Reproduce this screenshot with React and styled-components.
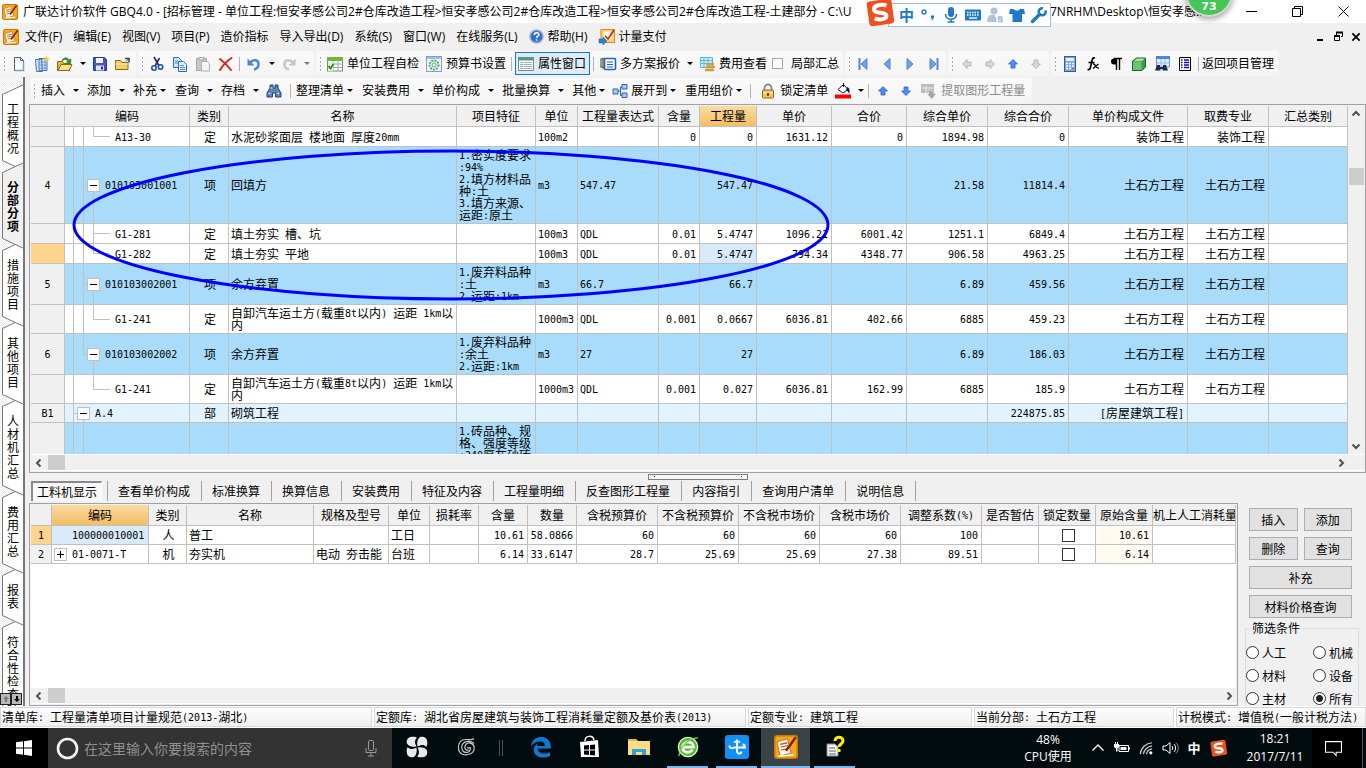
import React from 'react';
import styled, { createGlobalStyle, css } from 'styled-components';

const LINE = '#c0c0c0';
const FACE = '#f0f0f0';
const UI = '"Open Sans", "Noto Sans CJK SC", sans-serif';
const GRID = '"Noto Sans CJK SC", sans-serif';

const Global = createGlobalStyle`
  *, *::before, *::after { box-sizing: border-box; }
  body { margin: 0; background: ${FACE}; overflow: hidden; }
  button, input { font: inherit; color: inherit; margin: 0; }
  button { padding: 0; border: 0; background: none; }
`;

const Window = styled.div`
  height: 100vh;
  display: flex;
  flex-direction: column;
  background: ${FACE};
  color: #000;
  font: 12px/16px ${UI};
  position: relative;
  overflow: hidden;
`;

/* ---------- text ---------- */

const Latin = styled.span`
  font: 10px/0 "DejaVu Sans Mono", monospace;
  vertical-align: 1px;
`;

function T({ children }) {
  return String(children)
    .split(/([\x20-\x7e]+)/)
    .filter(Boolean)
    .map((s, i) => (/^[\x20-\x7e]+$/.test(s) ? <Latin key={i}>{s}</Latin> : s));
}

/* ---------- icons ---------- */

const Svg = styled.svg`
  display: block;
  flex: none;
  overflow: visible;
`;
const Ico = ({ s = 16, box = 16, children }) => (
  <Svg width={s} height={s} viewBox={`0 0 ${box} ${box}`} fill="none" aria-hidden="true">{children}</Svg>
);

const AppLogo = ({ s }) => (
  <Ico s={s}>
    <rect x=".5" y=".5" width="15" height="15" rx="1.5" fill="#f6a81c" stroke="#c8770a" />
    <path d="M2 4.500l7-2 2.500 9.500-7.500 2z" fill="#fff8e6" stroke="#b86a10" strokeWidth=".6" />
    <path d="M4 6.2l5-1M4.4 8l5-1M4.8 10l5-1" stroke="#9a5a20" strokeWidth=".8" />
    <path d="M14.500 1.500L8 10.500" stroke="#8a1c08" strokeWidth="1.600" />
    <path d="M3 14.200l10-1" stroke="#fff" />
  </Ico>
);
const New = () => (
  <Ico><path d="M3.500 1.500h6l3 3v10h-9z" fill="#fdfeff" stroke="#4c6384" /><path d="M9.500 1.500v3h3" stroke="#4c6384" /><path d="M12.500 6v8.500h-8" stroke="#7d9cc8" strokeWidth="1.4" /></Ico>
);
const Sheets = () => (
  <Ico><path d="M1.500 3.500h6l1 12h-6zM5 2.500h8v12H5z" fill="#dce9fa" stroke="#4674b4" /><path d="M5 6h8M5 9h8M5 12h8M8 3v12M11 3v12" stroke="#6b95cf" /><path d="M12.500 0v6M9.500 3h6M10.500 1l4 4M14.500 1l-4 4" stroke="#ffce3a" /></Ico>
);
const Open = () => (
  <Ico><path d="M.5 14.500V5.500h5l1 2h6v7z" fill="#e6b53c" stroke="#8b6914" /><path d="M1 14.500l3-6h11l-3 6z" fill="#fbe08a" stroke="#8b6914" /><path d="M5 5c1-4 6-4 7-1l2-1-.5 5-4-2 1.500-1C10 3 7 3 5 5z" fill="#2da32c" stroke="#127017" strokeWidth=".6" /></Ico>
);
const Save = () => (
  <Ico><path d="M1.500 1.500h11l2 2v11h-13z" fill="#4a55c4" stroke="#2c3590" /><path d="M4 2h7v5H4z" fill="#f3f5ff" /><path d="M4 9.500h8v5H4z" fill="#dfe3f8" /><path d="M9 10.500h2v3H9z" fill="#2c3590" /></Ico>
);
const Folder = () => (
  <Ico><path d="M.5 13.500v-9h5l1.500 2h6v7z" fill="#f1cf6b" stroke="#8b6914" /><path d="M.5 8h12.500" stroke="#fbe9ae" /><path d="M10 2.500h4v4" stroke="#27486e" strokeWidth="1.500" /><path d="M14 2.500l-3 3" stroke="#27486e" /></Ico>
);
const Cut = () => (
  <Ico><path d="M5 1l5 9M10.500 2L6 10" stroke="#20304c" strokeWidth="1.600" /><circle cx="5" cy="12" r="2.200" stroke="#1f4fa8" strokeWidth="1.600" /><circle cx="11.500" cy="11" r="2.200" stroke="#1f4fa8" strokeWidth="1.600" /></Ico>
);
const Copy = ({ off }) => (
  <Ico>
    {off ? (
      <><path d="M1.500 2.500h10v12h-10z" fill="#c9c9c9" stroke="#a6a6a6" /><path d="M4 1.500h5v2.500H4z" fill="#e6e6e6" stroke="#a6a6a6" /><path d="M6.500 5.500h6l2 2v7.500h-8z" fill="#f4f4f4" stroke="#b0b0b0" /></>
    ) : (
      <><path d="M1.500 1.500h5l3 3v7h-8z" fill="#cfe3fb" stroke="#2d6bbd" /><path d="M6.500 5.500h5l3 3v7h-8z" fill="#e6f1ff" stroke="#2d6bbd" /><path d="M3 5h3M3 7h3M8 9.500h4M8 11.500h5M8 13.500h5" stroke="#4a8ad8" /></>
    )}
  </Ico>
);
const Cross = () => (
  <Ico><path d="M2 3c4 3 8 7 11 11M13.500 2C9 5 5 9 2 14" stroke="#d5202e" strokeWidth="2" strokeLinecap="round" /></Ico>
);
const Undo = ({ flip, c = '#4a84d8' }) => (
  <Ico><g transform={flip ? 'matrix(-1 0 0 1 16 0)' : undefined}><path d="M4 6.500C7 3 12.500 3.500 12.500 8c0 3-2 5-4.500 5.500" stroke={c} strokeWidth="2.400" /><path d="M1.500 2.500v7h7z" fill={c} /></g></Ico>
);
const Check = () => (
  <Ico><rect x=".5" y="1.500" width="15" height="13.500" fill="#fff" stroke="#7c8c7c" /><path d="M0 1h16v4H0z" fill="#6cb83c" /><path d="M1 8h14M1 11.500h14M6 5v10M11 5v10" stroke="#9aa79a" /><path d="M1 6h5v9H1z" fill="#dff0d4" /><path d="M1.500 10l2 2.500 3-4.500" stroke="#2c8a18" strokeWidth="1.800" /></Ico>
);
const Gear = () => (
  <Ico><rect x=".5" y=".5" width="15" height="15" fill="#eef5fb" stroke="#7ea2c4" /><path d="M1 2h14" stroke="#9dc2e2" strokeWidth="2" /><circle cx="8" cy="9" r="4.500" stroke="#63a868" strokeWidth="2" strokeDasharray="2 1" /><circle cx="8" cy="9" r="2" stroke="#63a868" /></Ico>
);
const Panel = () => (
  <Ico><rect x=".5" y="1.500" width="15" height="13" fill="#fff" stroke="#6b9292" /><path d="M1 3h14" stroke="#4c9a92" strokeWidth="3" /><path d="M2 6.500h3M2 8.500h3M2 10.500h3M2 12.500h3" stroke="#77b39f" /><path d="M6 6.500h8M6 8.500h8M6 10.500h8M6 12.500h8" stroke="#a4b0b0" /></Ico>
);
const Plans = () => (
  <Ico><path d="M3 3H1v8h2" stroke="#1fa04a" strokeWidth="1.400" /><path d="M5 2.500H3V12h2" stroke="#e23b2c" strokeWidth="1.400" /><rect x="4.500" y="2.500" width="11" height="11" rx="1" fill="#fff" stroke="#1c62c4" strokeWidth="1.600" /><path d="M7 6h6M7 8.500h6M7 11h6" stroke="#1c62c4" strokeWidth="1.200" /></Ico>
);
const Fees = () => (
  <Ico><path d="M1.500 1.500h12v10h-12z" fill="#c8efff" stroke="#58b8dc" /><path d="M1.500 4.500h12M1.500 7.500h12M5 1.500v10M9 1.500v10" stroke="#58b8dc" /><path d="M8 8h6M8 11h7M7 14h7" stroke="#c9a03e" strokeWidth="2.400" strokeLinecap="round" /></Ico>
);
const Nav = ({ flip, bar }) => (
  <Ico><g transform={flip ? 'matrix(-1 0 0 1 16 0)' : undefined}><path d="M11 2.500v11L5 8z" fill="#6f9fe8" stroke="#5585d8" />{bar && <path d="M3.500 2v12" stroke="#5585d8" strokeWidth="2" />}</g></Ico>
);
const Arrow = ({ r = 0, c = '#2f62c8', f = '#4f8cf0' }) => (
  <Ico><g transform={`rotate(${r} 8 8)`}><path d="M8 3.500l4.500 4.500H10v4H6V8H3.500z" fill={f} stroke={c} strokeWidth=".8" /></g></Ico>
);
const Calc = () => (
  <Ico><rect x="2.500" y=".5" width="11" height="15" fill="#7aa5e4" stroke="#31599c" /><path d="M4 3.500h8" stroke="#e6f2ff" strokeWidth="3" /><path d="M4 7.500h8M4 10h8M4 12.500h8" stroke="#fff" strokeWidth="1.500" strokeDasharray="2 1" /><path d="M10 12.500h2" stroke="#e04030" strokeWidth="1.500" /></Ico>
);
const Fx = () => (
  <Ico><path d="M10 2C7 1 7 5 6 9s-1 5-3.500 4.500M3.500 6.500h6" stroke="#000" strokeWidth="1.700" /><path d="M8 8c3-1 2 5 6 4M13.500 8L8 12.500" stroke="#000" strokeWidth="1.400" /></Ico>
);
const Para = () => (
  <Ico><path d="M8.500 2.500H6a3 3 0 000 6h2.500z" fill="#000" /><path d="M8.500 2v12M11.500 2v12M6 2.500h8" stroke="#000" strokeWidth="1.400" /></Ico>
);
const Cube = () => (
  <Ico><path d="M1.500 5l4-3h9v9l-3.500 3.500h-9.500z" fill="#3c9a4a" stroke="#1f5f2b" /><path d="M2 5.500h8.500v8.500H2z" fill="#6cc276" /><path d="M2.500 5l3.500-2.500h8L11 5z" fill="#a8e0ac" /></Ico>
);
const Find = () => (
  <Ico><path d="M2.500 1h13v10h-13z" fill="#e2edfb" stroke="#6a93cf" /><path d="M2 1.500h14" stroke="#4d85d8" strokeWidth="3" /><path d="M7 3v8M11 3v8M3 7h12" stroke="#9bb9e2" /><path d="M3 9h3v2h3V9h3l2 5.500H8.500V13h-2v1.500H1z" fill="#1c2d4b" /></Ico>
);
const List = () => (
  <Ico><path d="M2.500 1.500h11v13h-11z" fill="#fff" stroke="#000" /><path d="M4 4h1.500M7 4h5M4 6.500h1.500M7 6.500h5M4 9h1.500M7 9h5M4 11.500h1.500M7 11.500h5" stroke="#10107a" strokeWidth="1.400" /></Ico>
);
const Binoc = () => (
  <Ico><path d="M4 2h3v3h2V2h3v3l3 5v4h-5.500v-4h-3v4H1v-4l3-5z" fill="#5f83b4" stroke="#27446f" /><path d="M2.500 10.500h2M11 10.500h2M4.500 5h2" stroke="#dbe8fa" /></Ico>
);
const Expand = () => (
  <Ico><path d="M1 6h5v5H1zM10 1.500h5v4.500h-5zM10 10h5v4.500h-5z" fill="#a9c9f6" stroke="#2f62b4" /><path d="M6 8h2.500M10 4H8.500v8.500H10" stroke="#2f62b4" /></Ico>
);
const Lock = () => (
  <Ico><path d="M4.500 8V5a3.500 3.500 0 017 0v3" stroke="#8a8a8a" strokeWidth="1.800" /><rect x="2.500" y="7" width="11" height="8" rx="1" fill="#f0c75c" stroke="#8c6a1c" /><path d="M3 10h10" stroke="#fbe6a8" /><path d="M8 10v3" stroke="#4c380a" strokeWidth="1.800" /></Ico>
);
const Bucket = () => (
  <Ico><path d="M3 6.500L8.500 1.500l4.500 5-5 3.500z" fill="#fff" stroke="#101848" /><path d="M8.500 0v4" stroke="#101848" /><path d="M12 4c3 1 3 4 2 7-.5-2-1-3-3-3.500z" fill="#101848" /><path d="M0 13.500h16" stroke="#f00" strokeWidth="4" /></Ico>
);
const Extract = () => (
  <Ico><path d="M0 1h13v9H0z" fill="#bcbcbc" /><path d="M1 5h11M5 3v7" stroke="#ececec" /><path d="M7 7l5 1v2l3 1-4 5-5-5h2z" fill="#a3a3a3" stroke="#eee" strokeWidth=".5" /></Ico>
);
const Help = () => (
  <Ico s={15}><circle cx="8" cy="8" r="7" fill="#2f6fd4" stroke="#9fb4d4" strokeWidth="1.600" /><path d="M5.700 6.300c0-3 4.800-3 4.800-.3 0 1.700-2.400 1.700-2.400 3.500M8.100 10.800v1.600" stroke="#fff" strokeWidth="1.700" /></Ico>
);
const Pay = () => (
  <Ico><rect x="2" y=".5" width="13.500" height="13" fill="#ffce78" stroke="#d88a1a" /><path d="M4 3l7-1 2 8-7 2z" fill="#fff6e4" /><path d="M6 7l3 3 6-9" stroke="#b43418" strokeWidth="1.600" /><path d="M0 10h4V8l4 4-4 4v-2H0z" fill="#2a83d8" stroke="#155a9c" strokeWidth=".5" /></Ico>
);
const Sogou = ({ s }) => (
  <Ico s={s} box={28}><g transform="rotate(-8 14 14)"><rect x="2" y="1" width="25" height="25" rx="3" fill="#f0501e" /><path d="M21.500 7.500C17 5 8.500 5.500 8.500 10c0 5 11.500 2.500 11.500 7.500 0 3.500-7 4-12 1" stroke="#fff" strokeWidth="4" /></g></Ico>
);

/* ---------- title bar ---------- */

const TitleBar = styled.header`
  flex: none;
  height: 23px;
  background: #fff;
  display: flex;
  align-items: center;
  padding-left: 2px;
  gap: 5px;
  white-space: nowrap;
`;
const TitleText = styled.span`
  flex: 0 0 ${p => p.$w}px;
`;
const Push = styled.span`
  flex: 1;
`;
const WinButtons = styled.div`
  display: flex;
`;
const WinButton = styled.button`
  width: 46px;
  height: 20px;
  display: grid;
  place-items: center;
`;
const MdiButton = styled.button`
  width: 18px;
  height: 16px;
  display: grid;
  place-items: center;
`;
const MinIcon = () => <Ico s={11} box={11}><path d="M0 5.500h11" stroke="#000" /></Ico>;
const RestoreIcon = ({ bold }) => (
  <Ico s={11} box={11}>{bold
    ? <><path d="M3.500 4V1.500h6v4H8" stroke="#000" /><path d="M3 1.500h7" stroke="#000" strokeWidth="2" /><path d="M1.500 5h5v4.500h-5z" stroke="#000" /><path d="M1 5h6" stroke="#000" strokeWidth="2" /></>
    : <path d="M.5 2.500h8v8h-8zM2.500 2.500v-2h8v8h-2" stroke="#000" />}
  </Ico>
);
const CloseIcon = ({ bold }) => <Ico s={bold ? 8 : 11} box={11}><path d="M.5.500l10 10M10.500.500l-10 10" stroke="#000" strokeWidth={bold ? 2.400 : 1} /></Ico>;

const ImeBar = styled.div`
  position: absolute;
  top: 3px;
  left: 888px;
  width: 163px;
  height: 24px;
  background: #fcfdfe;
  border: 1px solid #a9bdd2;
  display: flex;
  align-items: center;
  padding-left: 10px;
  gap: 6px;
  color: #1f78c8;
`;
const ImeLogo = styled.span`
  position: absolute;
  left: -23px;
  top: -5px;
`;
const ImeChar = styled.span`
  font: 700 15px/20px ${GRID};
  width: 16px;
`;
const Ball = styled.div`
  position: absolute;
  top: -31px;
  left: 1185px;
  width: 48px;
  height: 48px;
  border-radius: 50%;
  background: #46c659;
  border: 2px solid #d2d8d4;
  box-shadow: 0 2px 6px rgba(0, 0, 0, .4);
  color: #fff;
  font: 700 11px/16px "DejaVu Sans", sans-serif;
  display: flex;
  align-items: flex-end;
  justify-content: center;
`;

/* ---------- menu and tool bars ---------- */

const MenuBar = styled.nav`
  flex: none;
  height: 28px;
  display: flex;
  align-items: center;
  padding: 0 1px 1px 3px;
  white-space: nowrap;
`;
const MenuItem = styled.button`
  display: flex;
  align-items: center;
  gap: 4px;
  margin-right: 11px;
`;
const MenuLogo = styled.span`
  margin-right: 6px;
`;
const ToolRow = styled.div`
  flex: none;
  height: ${p => (p.$last ? 27 : 26)}px;
  padding: ${p => (p.$last ? '1px 0 0 30px' : '0')};
  display: flex;
  gap: 2px;
  white-space: nowrap;
`;
const ToolGroup = styled.div`
  height: 25px;
  display: flex;
  align-items: center;
  background: linear-gradient(#fafafa, #f4f4f4);
  border-radius: 3px;
  padding-right: ${p => p.$end || 2}px;
`;
const Grip = styled.span`
  width: 7px;
  height: 16px;
  margin-right: ${p => (p.$wide ? 4 : 0)}px;
  background: radial-gradient(circle, #aaa 1px, transparent 1px) 3px 0 / 3px 4px repeat-y;
`;
const IconButton = styled.button`
  width: 23px;
  height: 22px;
  display: grid;
  place-items: center;
`;
const Label = styled.button`
  padding: 0 3px 0 1px;
  color: ${p => (p.$off ? '#8a8a8a' : 'inherit')};
`;
const Toggle = styled.button`
  height: 23px;
  margin: 0 1px;
  padding: 0 3px 0 2px;
  display: flex;
  align-items: center;
  gap: 4px;
  background: #dfebf7;
  border: 1px solid #1874cd;
`;
const Sep = styled.span`
  width: 1px;
  height: 14px;
  margin: 0 ${p => (p.$wide ? 5 : 2)}px;
  background: #b4b4b4;
`;
const DropButton = styled.button`
  width: 12px;
  height: 20px;
  display: grid;
  place-items: center;
  opacity: ${p => (p.$off ? .5 : 1)};
`;
const MenuButton = styled.button`
  display: flex;
  align-items: center;
  gap: ${p => (p.$tight ? 0 : 5)}px;
  padding-right: ${p => (p.$flush ? 0 : p.$tight ? 6 : 5)}px;
`;
const Caret = styled.span`
  margin: 0 4px;
  border: solid transparent;
  border-width: 3px 3px 0;
  border-top-color: #000;
`;
const CaretBox = styled.span`
  width: 12px;
  display: flex;
  justify-content: center;
`;
const LocalSum = styled.label`
  display: flex;
  align-items: center;
  gap: 8px;
  padding-left: 2px;
  & input {
    appearance: none;
    width: 11px;
    height: 11px;
    border: 1px solid #a6a6a6;
    background: #fff;
  }
`;
const Drop = ({ off }) => <DropButton $off={off} aria-label="更多"><Caret /></DropButton>;
const IB = ({ i, t }) => <IconButton aria-label={t}>{i}</IconButton>;
const TextMenu = ({ t, tight, flush }) => <MenuButton $tight={tight} $flush={flush}>{t}<CaretBox><Caret /></CaretBox></MenuButton>;

/* ---------- left rail ---------- */

const Body = styled.div`
  flex: 1;
  min-height: 0;
  display: flex;
`;
const Rail = styled.nav`
  flex: none;
  width: 25px;
  margin-top: -27px;
  padding-top: 7px;
  position: relative;
  overflow: hidden;
  display: flex;
  flex-direction: column;
  background: repeating-conic-gradient(#fff 0 25%, #ececec 0 50%) 0 0 / 2px 2px;
  border-right: 2px solid #777;
`;
const RailTab = styled.button`
  flex: none;
  position: relative;
  z-index: ${p => p.$z};
  width: 23px;
  height: ${p => p.$n * 13 + 35}px;
  margin-bottom: -9px;
  padding: 0 3px 0 6px;
  font: ${p => (p.$on ? 700 : 400)} 12px/13px ${GRID};
  display: grid;
  place-items: center;
  word-break: break-all;
  & svg { position: absolute; left: 0; top: 0; z-index: -1; }
`;
const RailArrows = styled.div`
  position: absolute;
  z-index: 20;
  left: 0;
  bottom: 1px;
  display: flex;
  & button {
    width: 11px;
    height: 12px;
    display: grid;
    place-items: center;
    background: #b8b8b8;
    border: 1px solid #222;
  }
`;
const railTabs = ['工程概况', '分部分项', '措施项目', '其他项目', '人材机汇总', '费用汇总', '报表', '符合性检查结果'];
function RailItem({ text, on, z }) {
  const h = text.length * 13 + 35;
  return (
    <RailTab $n={text.length} $on={on} $z={z}>
      <Svg width={on ? 25 : 23} height={h} aria-hidden="true">
        <path d={`M25 0L2.500 10.500V${h - 10.500}L25 ${h}`} fill={on ? FACE : '#fff'} stroke="#777" />
      </Svg>
      {text}
    </RailTab>
  );
}

/* ---------- grids ---------- */

const Main = styled.main`
  flex: 1;
  min-width: 0;
  min-height: 0;
  margin-left: 4px;
  display: flex;
  flex-direction: column;
`;
const Frame = styled.section`
  position: relative;
  min-width: 0;
  min-height: 0;
  flex: 1 1 0;
  background: ${FACE};
  border: 1px solid #a0a0a6;
  padding: 1px;
  display: flex;
  flex-direction: column;
`;
const FrameRow = styled.div`
  flex: 1;
  min-height: 0;
  display: flex;
`;
const Clip = styled.div`
  flex: 1;
  min-width: 0;
  min-height: 0;
  overflow: hidden;
  background: #fff;
`;
const Table = styled.table`
  width: 100%;
  table-layout: fixed;
  border-collapse: separate;
  border-spacing: 0;
  font: 12px/12px ${GRID};
`;
const Row = styled.tr`
  height: ${p => p.$h}px;
  background: ${p => p.$bg || '#fff'};
`;
const edge = css`
  border: solid ${LINE};
  border-width: 0 1px 1px 0;
  padding: 0;
  font-weight: 400;
  overflow: hidden;
`;
const Head = styled.th`
  ${edge}
  height: 21px;
  white-space: nowrap;
  background: ${p => (p.$on ? 'linear-gradient(#fadca4, #f3bd62)' : FACE)};
`;
const Num = styled.th`
  ${edge}
  text-align: center;
  background: ${p => (p.$on ? '#ffd48c' : FACE)};
`;
const Cell = styled.td`
  ${edge}
  padding: 0 ${p => (p.$a === 'right' ? 3 : 0)}px 0 2px;
  text-align: ${p => p.$a || 'left'};
  white-space: ${p => (p.$wrap ? 'pre-line' : 'nowrap')};
  word-break: break-all;
  background: ${p => p.$bg || 'transparent'};
`;
const bar = (x, y, w, h) => `linear-gradient(${LINE}, ${LINE}) ${x}px ${y} / ${w}px ${h} no-repeat`;
const pieces = {
  a: bar(8, '0', 1, '100%'),
  b: bar(18, '0', 1, '100%'),
  bTop: bar(18, '0', 1, '50%'),
  bEnd: bar(18, '100%', 1, '50%'),
  c: bar(28, '0', 1, '100%'),
  cTop: bar(28, '0', 1, '50%'),
  cEnd: bar(28, '100%', 1, '50%'),
  leaf: bar(28, '50%', 17, '1px'),
  arm: bar(18, '50%', 5, '1px'),
  armA: bar(8, '50%', 5, '1px'),
};
const TreeCell = styled.td`
  ${edge}
  padding-left: ${p => p.$pad}px;
  background: ${p => p.$lines.split(' ').map(k => pieces[k]).join(', ')};
`;
const TreeInner = styled.span`
  display: flex;
  align-items: center;
  gap: 5px;
`;
const Fold = styled.button`
  width: 13px;
  height: 13px;
  background: #fff;
  border: 1px solid ${LINE};
  display: grid;
  place-items: center;
`;
const FoldBox = ({ plus }) => (
  <Fold aria-label={plus ? '展开' : '折叠'}><Ico s={7} box={7}><path d={plus ? 'M0 3.500h7M3.500 0v7' : 'M0 3.500h7'} stroke="#000" /></Ico></Fold>
);
const VBar = styled.div`
  flex: none;
  width: 16px;
  display: flex;
  flex-direction: column;
  align-items: center;
  background: ${FACE};
`;
const ScrollButton = styled.button`
  width: 15px;
  height: 16px;
  display: grid;
  place-items: center;
`;
const VThumb = styled.span`
  width: 15px;
  height: 17px;
  margin: 46px 0 auto;
  background: #cdcdcd;
`;
const HBar = styled.div`
  flex: none;
  height: 17px;
  padding-right: ${p => p.$end}px;
  display: flex;
  align-items: center;
  border-top: 1px solid #fff;
  border-bottom: 1px solid #fff;
`;
const HThumb = styled.span`
  width: 17px;
  height: 15px;
  margin-left: 2px;
  margin-right: auto;
  background: #cdcdcd;
`;
const Chevron = ({ r, label }) => (
  <ScrollButton aria-label={label}><Ico s={8} box={8}><path transform={`rotate(${r} 4 4)`} d="M.5 5.500L4 2l3.500 3.500" stroke="#505050" strokeWidth="2" /></Ico></ScrollButton>
);
const HScroll = ({ end = 0 }) => (
  <HBar $end={end}><Chevron r={-90} label="向左" /><HThumb /><Chevron r={90} label="向右" /></HBar>
);
const Mark = styled.svg`
  position: absolute;
  left: 41px;
  top: 44px;
  pointer-events: none;
`;

const cols = [34, 125, 39, 228, 79, 42, 81, 41, 57, 75, 75, 81, 81, 119, 81];
const heads = ['', '编码', '类别', '名称', '项目特征', '单位', '工程量表达式', '含量', '工程量', '单价', '合价', '综合单价', '综合合价', '单价构成文件', '取费专业', '汇总类别'];
const BLUE = '#a9dbfb';
const haul = '自卸汽车运土方(载重8t以内) 运距 1km以内';
const earth = ['土石方工程', '土石方工程'];
const rows = [
  { h: 20, pad: 50, lines: 'a b cTop leaf', code: 'A13-30', kind: '定', v: ['水泥砂浆面层 楼地面 厚度20mm', '', '100m2', '', '0', '0', '1631.12', '0', '1894.98', '0', '装饰工程', '装饰工程'] },
  { h: 77, n: '4', bg: BLUE, pad: 22, fold: 1, lines: 'a b arm cEnd', code: '010103001001', kind: '项', v: ['回填方', '1.密实度要求\n:94%\n2.填方材料品\n种:土\n3.填方来源、\n运距:原土', 'm3', '547.47', '', '547.47', '', '', '21.58', '11814.4', ...earth] },
  { h: 20, pad: 50, lines: 'a b c leaf', code: 'G1-281', kind: '定', v: ['填土夯实 槽、坑', '', '100m3', 'QDL', '0.01', '5.4747', '1096.21', '6001.42', '1251.1', '6849.4', ...earth] },
  { h: 20, on: 1, pad: 50, lines: 'a b cTop leaf', code: 'G1-282', kind: '定', v: ['填土夯实 平地', '', '100m3', 'QDL', '0.01', '5.4747', '794.34', '4348.77', '906.58', '4963.25', ...earth] },
  { h: 41, n: '5', bg: BLUE, pad: 22, fold: 1, lines: 'a b arm cEnd', code: '010103002001', kind: '项', v: ['余方弃置', '1.废弃料品种\n:土\n2.运距:1km', 'm3', '66.7', '', '66.7', '', '', '6.89', '459.56', ...earth] },
  { h: 29, pad: 50, lines: 'a b cTop leaf', code: 'G1-241', kind: '定', v: [haul, '', '1000m3', 'QDL', '0.001', '0.0667', '6036.81', '402.66', '6885', '459.23', ...earth] },
  { h: 41, n: '6', bg: BLUE, pad: 22, fold: 1, lines: 'a bTop arm cEnd', code: '010103002002', kind: '项', v: ['余方弃置', '1.废弃料品种\n:余土\n2.运距:1km', 'm3', '27', '', '27', '', '', '6.89', '186.03', ...earth] },
  { h: 29, pad: 50, lines: 'a cTop leaf', code: 'G1-241', kind: '定', v: [haul, '', '1000m3', 'QDL', '0.001', '0.027', '6036.81', '162.99', '6885', '185.9', ...earth] },
  { h: 19, n: 'B1', bg: '#e1f3ff', pad: 12, fold: 1, lines: 'a armA bEnd', code: 'A.4', kind: '部', v: ['砌筑工程', '', '', '', '', '', '', '', '', '224875.85', '[房屋建筑工程]', ''] },
  { h: 41, bg: BLUE, pad: 22, lines: 'a b', code: '', kind: '', v: ['', '1.砖品种、规\n格、强度等级\n:240厚灰砂砖', '', '', '', '', '', '', '', '', '', ''] },
];

function MainGrid() {
  return (
    <Frame>
      <FrameRow>
        <Clip>
          <Table>
            <colgroup>{cols.map((w, i) => <col key={i} width={w} />)}<col /></colgroup>
            <thead><tr>{heads.map((h, i) => <Head key={i} $on={i === 8}>{h}</Head>)}</tr></thead>
            <tbody>
              {rows.map((r, i) => (
                <Row key={i} $h={r.h} $bg={r.bg}>
                  <Num $on={r.on}><T>{r.n || ''}</T></Num>
                  <TreeCell $pad={r.pad} $lines={r.lines}><TreeInner>{r.fold && <FoldBox />}<span><T>{r.code}</T></span></TreeInner></TreeCell>
                  <Cell $a="center">{r.kind}</Cell>
                  {r.v.map((t, j) => (
                    <Cell key={j} $wrap={j < 2} $a={j > 3 ? 'right' : 'left'} $bg={r.on && j === 5 ? '#d9eafa' : undefined}><T>{t}</T></Cell>
                  ))}
                  <Cell />
                </Row>
              ))}
            </tbody>
          </Table>
        </Clip>
        <VBar><Chevron r={0} label="向上" /><VThumb /><Chevron r={180} label="向下" /></VBar>
      </FrameRow>
      <HScroll end={16} />
      <Mark width="760" height="152" aria-hidden="true"><ellipse cx="380" cy="76" rx="377" ry="74" fill="none" stroke="#0000ff" strokeWidth="3" /></Mark>
    </Frame>
  );
}

/* ---------- lower area ---------- */

const Splitter = styled.div`
  flex: none;
  height: 8px;
  padding-top: 1px;
  display: flex;
  justify-content: center;
`;
const Handle = styled.span`
  width: 100px;
  height: 6px;
  padding: 1px 5px 0;
  border: 1px solid #7d7d86;
  background: #f6f6f6;
  display: flex;
  justify-content: space-between;
  &::before, &::after { content: ""; width: 1px; height: 1px; background: #223; }
`;
const Tabs = styled.div`
  flex: none;
  height: 22px;
  padding-left: 2px;
  display: flex;
  align-items: flex-start;
  font: 12px/18px ${GRID};
`;
const Tab = styled.button`
  height: 20px;
  padding: 0 11px 0 10px;
  border-right: 1px solid #a0a0a0;
  white-space: nowrap;
`;
const ActiveTab = styled.span`
  height: 20px;
  padding-right: 5px;
  border-right: 1px solid #a0a0a0;
  & button {
    height: 20px;
    padding: 0 4px 0 4px;
    background: #f8f8f8;
    border: solid #8a8a8a;
    border-width: 2px 0 0 2px;
    border-right: 1px solid #fff;
    line-height: 18px;
  }
`;
const Lower = styled.div`
  flex: 0 0 203px;
  min-height: 0;
  display: flex;
`;
const Side = styled.aside`
  flex: none;
  width: 128px;
  overflow: hidden;
  padding: 5px 7px 0;
  font: 12px/14px ${GRID};
`;
const Buttons = styled.div`
  display: grid;
  grid-template-columns: 1fr 1fr;
  gap: 6px;
  padding: 0 7px 0 4px;
`;
const PushButton = styled.button`
  height: 23px;
  grid-column: ${p => (p.$wide ? 'span 2' : 'auto')};
  border: 1px solid #adadad;
  background: #e1e1e1;
`;
const Filter = styled.fieldset`
  margin: 3px 0 0;
  height: 120px;
  padding: 6px 4px 0 0;
  border: 1px solid #dcdcdc;
  display: grid;
  grid-template-columns: 67px 1fr;
  grid-auto-rows: 23px;
  align-items: center;
  & legend { margin-left: 5px; padding: 0 1px; }
`;
const Option = styled.label`
  display: flex;
  align-items: center;
  gap: 3px;
  white-space: nowrap;
  & input {
    appearance: none;
    width: 13px;
    height: 13px;
    border: 1px solid #333;
    border-radius: 50%;
    background: #fff;
  }
  & input:checked { background: radial-gradient(circle, #222 3px, #fff 4px); }
`;
const LockBox = styled.input`
  appearance: none;
  display: block;
  width: 13px;
  height: 13px;
  && { margin: 0 auto; }
  border: 1px solid #333;
  background: #fff;
`;
const CodeInner = styled.span`
  display: flex;
  align-items: center;
  gap: 5px;
  padding-left: ${p => (p.$indent ? 18 : 0)}px;
`;

const lowCols = [21, 97, 38, 127, 75, 41, 49, 49, 49, 81, 81, 81, 81, 81, 57, 57, 57];
const lowHeads = ['', '编码', '类别', '名称', '规格及型号', '单位', '损耗率', '含量', '数量', '含税预算价', '不含税预算价', '不含税市场价', '含税市场价', '调整系数(%)', '是否暂估', '锁定数量', '原始含量', '机上人工消耗量'];
const lowRows = [
  { code: '100000010001', kind: '人', l: ['普工', '', '工日', ''], n: ['10.61', '58.0866', '60', '60', '60', '60', '100'], o: '10.61' },
  { code: '01-0071-T', kind: '机', l: ['夯实机', '电动 夯击能', '台班', ''], n: ['6.14', '33.6147', '28.7', '25.69', '25.69', '27.38', '89.51'], o: '6.14' },
];
const tabs = ['查看单价构成', '标准换算', '换算信息', '安装费用', '特征及内容', '工程量明细', '反查图形工程量', '内容指引', '查询用户清单', '说明信息'];

function LowerGrid() {
  return (
    <Frame>
      <Clip>
        <Table>
          <colgroup>{lowCols.map((w, i) => <col key={i} width={w} />)}<col /></colgroup>
          <thead><tr>{lowHeads.map((h, i) => <Head key={i} $on={i === 1}><T>{h}</T></Head>)}</tr></thead>
          <tbody>
            {lowRows.map((r, i) => (
              <Row key={i} $h={19}>
                <Num $on={i === 0}><T>{i + 1}</T></Num>
                <Cell $bg={i === 0 ? '#d9eafa' : undefined}><CodeInner $indent={i === 0}>{i === 1 && <FoldBox plus />}<span><T>{r.code}</T></span></CodeInner></Cell>
                <Cell $a="center">{r.kind}</Cell>
                {r.l.map((t, j) => <Cell key={j}><T>{t}</T></Cell>)}
                {r.n.map((t, j) => <Cell key={j} $a="right"><T>{t}</T></Cell>)}
                <Cell />
                <Cell><LockBox type="checkbox" aria-label="锁定数量" /></Cell>
                <Cell $a="right" $bg="#fffbf3"><T>{r.o}</T></Cell>
                <Cell />
              </Row>
            ))}
          </tbody>
        </Table>
      </Clip>
      <HScroll />
    </Frame>
  );
}

/* ---------- status bar ---------- */

const StatusBar = styled.footer`
  flex: none;
  height: 22px;
  padding: 1px 0 0;
  background: #fff;
  display: flex;
  gap: 2px;
  font: 12px/18px ${GRID};
  white-space: nowrap;
`;
const Status = styled.span`
  flex: ${p => (p.$w ? `0 0 ${p.$w}px` : '1')};
  height: 20px;
  padding-left: 1px;
  border: 1px solid #d8d8d8;
  background: linear-gradient(#fdfdfd, #efefef);
  overflow: hidden;
`;

/* ---------- task bar ---------- */

const TaskBar = styled.div`
  flex: none;
  height: 40px;
  background: #020c0e;
  color: #fff;
  display: flex;
  align-items: stretch;
`;
const Start = styled.button`
  width: 48px;
  background: #000;
  display: grid;
  place-items: center;
`;
const Search = styled.label`
  width: 344px;
  padding: 0 12px 0 8px;
  background: #333;
  display: flex;
  align-items: center;
  gap: 5px;
  & input {
    flex: 1;
    min-width: 0;
    border: 0;
    padding: 0;
    outline: 0;
    background: none;
    font: 14px/20px ${GRID};
  }
  & input::placeholder { color: #909090; opacity: 1; }
`;
const Task = styled.button`
  width: 49px;
  padding: 0 ${p => (p.$on ? 0 : 4)}px;
  background: ${p => (p.$on ? '#3a4446' : 'none')};
  display: flex;
  flex-direction: column;
  align-items: center;
  justify-content: center;
  &::after {
    content: "";
    width: 100%;
    height: 2px;
    margin-top: auto;
    background: ${p => (p.$run ? '#7ab8ef' : 'transparent')};
  }
  & svg { margin-top: auto; }
`;
const Bars = styled.span`
  width: 4px;
  height: 16px;
  align-self: center;
  margin: 0 13px 0 9px;
  border: solid #4a5355;
  border-width: 0 1px;
`;
const Cpu = styled.span`
  width: 60px;
  margin-left: auto;
  padding-top: 3px;
  text-align: center;
  line-height: 17px;
`;
const Tray = styled.div`
  display: flex;
  align-items: center;
  padding: 0 0 0 8px;
`;
const TrayItem = styled.button`
  width: 24px;
  display: grid;
  place-items: center;
  font: 700 13px/16px ${GRID};
`;
const Clock = styled.time`
  width: 74px;
  margin-left: 8px;
  text-align: center;
  line-height: 18px;
`;
const Notice = styled.button`
  width: 51px;
  padding-right: 8px;
  background: #000;
  display: grid;
  place-items: center;
  border-right: 1px solid #555;
  margin-right: 3px;
`;

const W = '#fff';
function Taskbar() {
  return (
    <TaskBar>
      <Start aria-label="开始"><Ico><path d="M0 2.300L7 1.300v6.200H0zM8 1.200L16 0v7.500H8zM0 8.500h7v6.200L0 13.700zM8 8.500h8V16L8 14.800z" fill={W} /></Ico></Start>
      <Search>
        <Ico s={23} box={23}><circle cx="11.500" cy="11.500" r="9.500" stroke="#f4f4f4" strokeWidth="2.600" /></Ico>
        <input placeholder="在这里输入你要搜索的内容" aria-label="搜索" />
        <Ico s={18} box={18}><rect x="6.500" y="1.500" width="5" height="10" rx="1" stroke="#9a9a9a" /><path d="M4 9v4.500h10V9M9 13.500V17M6 17h6" stroke="#9a9a9a" /></Ico>
      </Search>
      <Task aria-label="风扇"><Ico s={22} box={24}><g fill="#e8eaea">{[0, 90, 180, 270].map(a => <path key={a} transform={`rotate(${a} 12 12)`} d="M11.500 11.200C8 12.500 3 11.500 1.200 8.500 0 5.500 1.500 1.500 5 1c3-.5 6-.3 6.800.8C9 4.500 9.500 8 11.500 11.200z" />)}</g></Ico></Task>
      <Task aria-label="浏览"><Ico s={20} box={22}><path d="M20 2c-3 2-7 0-12 1-7 3-7 13-1 16 6 2 13-1 13-7 0-5-6-7-9-4-3 4 0 8 3 6M20 7c-4-3-10-3-13 1-2 4 0 9 4 9 3 0 5-2 5-5h-4" stroke="#c2c8c8" strokeWidth="1.300" /></Ico></Task>
      <Bars />
      <Task aria-label="Edge"><Ico s={22} box={22}><path d="M1 10C2 3 7 1 11.500 1 18 1 21 6 21 12.500H7.500c.5 4 4 5 7 5 2 0 4-.5 5.500-1.500v4c-2 1-4 1.500-7 1.500C6 21.500 3 17 4 12.500c.5-2.500 2-4 4-5-.7.800-1 1.800-1 2.500h8c0-3-1.500-4.500-4.500-4.500C6.500 5.500 3 7.500 1 10z" fill="#0a7ad8" /></Ico></Task>
      <Task aria-label="应用商店"><Ico s={24} box={24}><path d="M2 7l18-2 1 17H3z" fill={W} /><path d="M7 6c0-6 8-6 9-1" stroke={W} strokeWidth="1.500" /><path d="M6 10.500l5-.5v4.500H6zM12 10l5-.5v5h-5zM6 15.500h5V20l-5-.5zM12 15.500h5v5l-5-.5z" fill="#000" /></Ico></Task>
      <Task aria-label="文件资源管理器"><Ico s={22} box={22}><path d="M0 3h8l2 2h12v14H0z" fill="#fddc84" /><path d="M0 3h8l1 2H0z" fill="#e8b740" /><path d="M4 19v-6h14v6h-4v-3H8v3z" fill="#2f9ee0" /></Ico></Task>
      <Task $run aria-label="安全浏览器"><Ico s={22} box={24}><circle cx="12" cy="12" r="10.500" fill="#53b82c" stroke="#d9f2c8" strokeWidth="1.500" /><path d="M6 12h12c0-7-11-7-12 0 0 7 8 7 11 3" stroke={W} strokeWidth="3" /><path d="M2 22C4 10 14 2 23 2" stroke="#7fce4a" strokeWidth="1.500" /></Ico></Task>
      <Task $run aria-label="云伞"><Ico s={24} box={24}><rect width="24" height="24" rx="3" fill="#1290f4" /><path d="M12 4.500V16c0 3.500 4 3.500 4.500.5M4.500 10.500c0 3.500 3 3 4.500 2h11c0-2-1-3-2.500-3M9 7.500c2-1.500 4-1.500 6 0" stroke={W} strokeWidth="1.800" /></Ico></Task>
      <Task $run $on aria-label="广联达计价软件"><AppLogo s={24} /></Task>
      <Task $run aria-label="帮助"><Ico s={22} box={22}><path d="M3 8h8l3 3v9H3z" fill="#f1f1f1" stroke="#888" /><path d="M5 12h6M5 15h7M5 18h7" stroke="#666" /><path d="M11 5c0-5 8-5 8 0 0 3-4 3-4 6M15 13v3" stroke="#ffee00" strokeWidth="3" /></Ico></Task>
      <Cpu>48%<br />CPU使用</Cpu>
      <Tray>
        <TrayItem aria-label="显示隐藏的图标"><Ico s={12} box={12}><path d="M.5 8.500L6 3l5.500 5.500" stroke={W} strokeWidth="1.300" /></Ico></TrayItem>
        <TrayItem aria-label="电源"><Ico><path d="M5 5.500h9.500v6H5z" stroke={W} /><path d="M6.500 7h6v3h-6zM14.500 7.500h1.500v2h-1.500zM0 4h5v3L3.500 8.500v3H2V8.500L0 7z" fill={W} /><path d="M1.500 2v3M3.500 2v3" stroke={W} /></Ico></TrayItem>
        <TrayItem aria-label="网络"><Ico s={14}><g stroke="#c8cccc" strokeWidth="1.400"><path d="M1.500 15C2 8 8 2.500 15 2M5 15c.5-5 5-9 10-9.500M8.500 15c.5-3 3-5.500 6.500-6" /></g><circle cx="13.500" cy="13.500" r="1.800" fill={W} /></Ico></TrayItem>
        <TrayItem aria-label="音量"><Ico><path d="M1 6h3l4-3.500v11L4 10H1z" stroke={W} /><path d="M10 6c1 1 1 3 0 4M12 4c2 2 2 6 0 8" stroke={W} /><path d="M14 2.500c3 3 3 8 0 11" stroke="#8a9090" /></Ico></TrayItem>
        <TrayItem>中</TrayItem>
        <TrayItem aria-label="输入法"><Sogou s={17} /></TrayItem>
        <Clock>18:21<br />2017/7/11</Clock>
      </Tray>
      <Notice aria-label="通知"><Ico s={17}><path d="M.5 1.500h15v10h-5v3l-3-3h-7z" stroke={W} /></Ico></Notice>
    </TaskBar>
  );
}

/* ---------- app ---------- */

function EditTools() {
  return (
    <ToolGroup $end={4}>
      <Grip $wide />
      <TextMenu t="插入" /><TextMenu t="添加" /><TextMenu t="补充" tight /><TextMenu t="查询" /><TextMenu t="存档" flush />
      <IB i={<Binoc />} t="查找" /><Sep $wide />
      <TextMenu t="整理清单" tight /><TextMenu t="安装费用" /><TextMenu t="单价构成" /><TextMenu t="批量换算" /><TextMenu t="其他" tight flush />
      <IB i={<Expand />} t="展开" /><TextMenu t="展开到" tight /><TextMenu t="重用组价" tight flush /><Sep $wide />
      <IB i={<Lock />} t="锁定" /><Label>锁定清单</Label><IB i={<Bucket />} t="填充色" /><Drop /><Sep />
      <IB i={<Arrow />} t="上移" /><IB i={<Arrow r={180} />} t="下移" /><IB i={<Extract />} t="提取" /><Label $off>提取图形工程量</Label>
    </ToolGroup>
  );
}

export default function App() {
  return (
    <>
      <Global />
      <Window>
        <TitleBar>
          <AppLogo s={16} />
          <TitleText $w={1022}>广联达计价软件 GBQ4.0 - [招标管理 - 单位工程:恒安孝感公司2#仓库改造工程&gt;恒安孝感公司2#仓库改造工程&gt;恒安孝感公司2#仓库改造工程-土建部分 - C:\U</TitleText>
          <span>7NRHM\Desktop\恒安孝感...</span>
          <Push />
          <WinButtons>
            <WinButton aria-label="最小化"><MinIcon /></WinButton>
            <WinButton aria-label="还原"><RestoreIcon /></WinButton>
            <WinButton aria-label="关闭"><CloseIcon /></WinButton>
          </WinButtons>
        </TitleBar>
        <MenuBar>
          <MenuLogo><AppLogo s={16} /></MenuLogo>
          {['文件(F)', '编辑(E)', '视图(V)', '项目(P)', '造价指标', '导入导出(D)', '系统(S)', '窗口(W)', '在线服务(L)'].map(t => <MenuItem key={t}>{t}</MenuItem>)}
          <MenuItem><Help />帮助(H)</MenuItem>
          <MenuItem><Pay />计量支付</MenuItem>
          <Push />
          <MdiButton aria-label="最小化窗口"><Ico s={8} box={8}><path d="M1 7h6" stroke="#000" strokeWidth="2" /></Ico></MdiButton>
          <MdiButton aria-label="还原窗口"><RestoreIcon bold /></MdiButton>
          <MdiButton aria-label="关闭窗口"><CloseIcon bold /></MdiButton>
        </MenuBar>
        <ToolRow>
          <ToolGroup>
            <Grip /><IB i={<New />} t="新建" /><IB i={<Sheets />} t="新建项目" /><IB i={<Open />} t="打开" /><Drop /><IB i={<Save />} t="保存" /><IB i={<Folder />} t="目录" />
          </ToolGroup>
          <ToolGroup>
            <Grip /><IB i={<Cut />} t="剪切" /><IB i={<Copy />} t="复制" /><IB i={<Copy off />} t="粘贴" /><IB i={<Cross />} t="删除" /><Sep />
            <IB i={<Undo />} t="撤销" /><Drop /><IB i={<Undo flip c="#c4c4c4" />} t="重做" /><Drop off />
          </ToolGroup>
          <ToolGroup $end={4}>
            <Grip /><IB i={<Check />} t="自检" /><Label>单位工程自检</Label><IB i={<Gear />} t="设置" /><Label>预算书设置</Label><Sep />
            <Toggle><Panel />属性窗口</Toggle><Sep />
            <IB i={<Plans />} t="方案" /><Label>多方案报价</Label><Drop /><IB i={<Fees />} t="费用" /><Label>费用查看</Label>
            <LocalSum><input type="checkbox" />局部汇总</LocalSum>
          </ToolGroup>
          <ToolGroup>
            <Grip /><IB i={<Nav bar />} t="第一条" /><IB i={<Nav />} t="上一条" /><IB i={<Nav flip />} t="下一条" /><IB i={<Nav flip bar />} t="最后一条" />
          </ToolGroup>
          <ToolGroup>
            <Grip /><IB i={<Arrow r={-90} c="#a8a8a8" f="#d8d8d8" />} t="左移" /><IB i={<Arrow r={90} c="#a8a8a8" f="#d8d8d8" />} t="右移" /><IB i={<Arrow />} t="上移" /><IB i={<Arrow r={180} c="#a8a8a8" f="#d8d8d8" />} t="下移" />
          </ToolGroup>
          <ToolGroup>
            <Grip /><IB i={<Calc />} t="计算器" /><IB i={<Fx />} t="函数" /><IB i={<Para />} t="特殊符号" /><IB i={<Cube />} t="图形" /><IB i={<Find />} t="查找" /><IB i={<List />} t="列表" /><Sep />
            <Label>返回项目管理</Label>
          </ToolGroup>
        </ToolRow>
        <ToolRow $last><EditTools /></ToolRow>
        <Body>
          <Rail>
            {railTabs.map((t, i) => <RailItem key={t} text={t} on={i === 1} z={i === 1 ? 15 : 10 - i} />)}
            <RailArrows>
              <button aria-label="上翻"><Ico s={8} box={8}><path d="M4 1l3 3H5v3H3V4H1z" fill="#777" /></Ico></button>
              <button aria-label="下翻"><Ico s={8} box={8}><path d="M4 7l3-3H5V1H3v3H1z" fill="#000" /></Ico></button>
            </RailArrows>
          </Rail>
          <Main>
            <MainGrid />
            <Splitter><Handle /></Splitter>
            <Tabs>
              <ActiveTab><button>工料机显示</button></ActiveTab>
              {tabs.map(t => <Tab key={t}>{t}</Tab>)}
            </Tabs>
            <Lower>
              <LowerGrid />
              <Side>
                <Buttons>
                  {['插入', '添加', '删除', '查询'].map(t => <PushButton key={t}>{t}</PushButton>)}
                  <PushButton $wide>补充</PushButton>
                  <PushButton $wide>材料价格查询</PushButton>
                </Buttons>
                <Filter>
                  <legend>筛选条件</legend>
                  {['人工', '机械', '材料', '设备', '主材', '所有'].map(t => (
                    <Option key={t}><input type="radio" name="filter" defaultChecked={t === '所有'} />{t}</Option>
                  ))}
                </Filter>
              </Side>
            </Lower>
          </Main>
        </Body>
        <StatusBar>
          <Status $w={372}><T>清单库: 工程量清单项目计量规范(2013-湖北)</T></Status>
          <Status $w={372}><T>定额库: 湖北省房屋建筑与装饰工程消耗量定额及基价表(2013)</T></Status>
          <Status $w={224}><T>定额专业: 建筑工程</T></Status>
          <Status $w={200}><T>当前分部: 土石方工程</T></Status>
          <Status><T>计税模式: 增值税(一般计税方法)</T></Status>
        </StatusBar>
        <Taskbar />
        <ImeBar>
          <ImeLogo><Sogou s={28} /></ImeLogo>
          <ImeChar>中</ImeChar>
          <Ico><circle cx="3" cy="5" r="2" stroke="#1f78c8" strokeWidth="1.400" /><path d="M10 8.500h3c0 3-.5 4-3 5 1-1.500 1-2 0-3z" fill="#1f78c8" /></Ico>
          <Ico><rect x="5" y="0" width="6" height="10" rx="3" fill="#1f78c8" /><path d="M2.500 7c0 7 11 7 11 0M8 12v3M4.500 15h7" stroke="#1f78c8" strokeWidth="1.600" /></Ico>
          <Ico><rect y="2.500" width="16" height="11" rx="1" fill="#1f78c8" /><path d="M2 5.500h12M2 8h12" stroke="#fff" strokeWidth="1.400" strokeDasharray="1.500 1" /><path d="M4 11h8" stroke="#fff" strokeWidth="1.400" /></Ico>
          <Ico><circle cx="7" cy="4" r="3.500" fill="#b3c3d6" /><path d="M0 15c0-7 4-8 8-7v7z" fill="#b3c3d6" /><path d="M8.500 10v5M15.500 10h-4v2h3.500v2.500h-4" stroke="#a5b7cc" strokeWidth="1.300" /></Ico>
          <Ico><path d="M1 2h4c1 2 5 2 6 0h4l1 5h-3v8H3.500V7H0z" fill="#1f78c8" /></Ico>
          <Ico><path d="M1.500 14.500l7-7" stroke="#1f78c8" strokeWidth="3.400" strokeLinecap="round" /><path d="M14.500 3.500A3.500 3.500 0 1112 1.300" stroke="#1f78c8" strokeWidth="2.600" /></Ico>
        </ImeBar>
        <Ball>73</Ball>
      </Window>
    </>
  );
}
